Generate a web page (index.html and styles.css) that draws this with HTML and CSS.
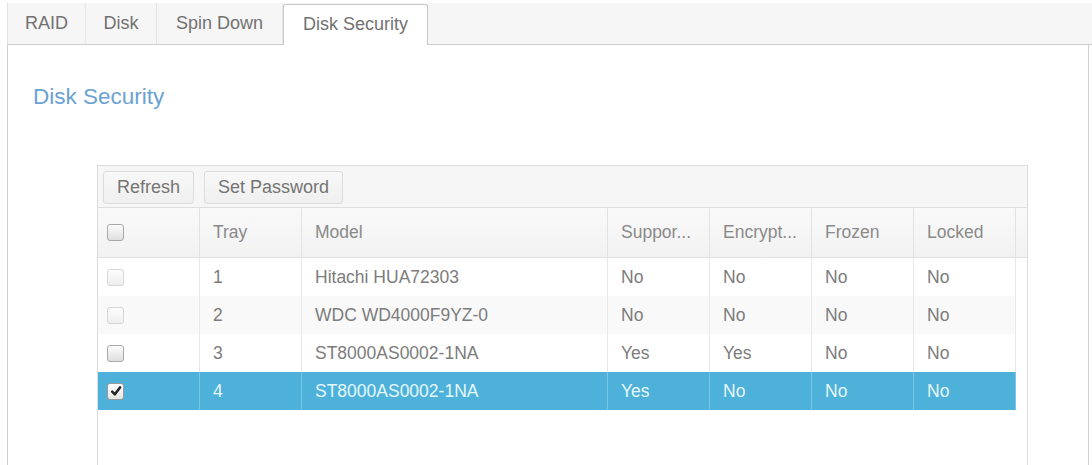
FILE: index.html
```html
<!DOCTYPE html>
<html>
<head>
<meta charset="utf-8">
<title>Disk Security</title>
<link rel="stylesheet" href="styles.css">
</head>
<body>
<div class="tabbar">
  <div class="tab first w-raid">RAID</div>
  <div class="tab w-disk">Disk</div>
  <div class="tab w-spin">Spin Down</div>
  <div class="tab active w-sec">Disk Security</div>
</div>
<div class="panel">
  <h1 class="title">Disk Security</h1>
  <div class="grid">
    <div class="toolbar">
      <button class="btn">Refresh</button>
      <button class="btn">Set Password</button>
    </div>
    <div class="head">
      <div class="hc cbcell"><span class="cb"></span></div>
      <div class="hc">Tray</div>
      <div class="hc">Model</div>
      <div class="hc">Suppor...</div>
      <div class="hc">Encrypt...</div>
      <div class="hc">Frozen</div>
      <div class="hc">Locked</div>
      <div class="hc filler"></div>
    </div>
    <div class="row">
      <div class="c cbcell"><span class="cb disabled"></span></div>
      <div class="c">1</div>
      <div class="c">Hitachi HUA72303</div>
      <div class="c">No</div>
      <div class="c">No</div>
      <div class="c">No</div>
      <div class="c">No</div>
    </div>
    <div class="row alt">
      <div class="c cbcell"><span class="cb disabled"></span></div>
      <div class="c">2</div>
      <div class="c">WDC WD4000F9YZ-0</div>
      <div class="c">No</div>
      <div class="c">No</div>
      <div class="c">No</div>
      <div class="c">No</div>
    </div>
    <div class="row">
      <div class="c cbcell"><span class="cb"></span></div>
      <div class="c">3</div>
      <div class="c">ST8000AS0002-1NA</div>
      <div class="c">Yes</div>
      <div class="c">Yes</div>
      <div class="c">No</div>
      <div class="c">No</div>
    </div>
    <div class="row selected">
      <div class="c cbcell"><span class="cb checked"><svg viewBox="0 0 12 12" width="12" height="12"><path d="M2.2 6.6 L4.9 9.3 L10 2.4" fill="none" stroke="#262626" stroke-width="2.6" stroke-linecap="round" stroke-linejoin="round"/></svg></span></div>
      <div class="c">4</div>
      <div class="c">ST8000AS0002-1NA</div>
      <div class="c">Yes</div>
      <div class="c">No</div>
      <div class="c">No</div>
      <div class="c">No</div>
    </div>
  </div>
</div>
</body>
</html>
```
FILE: styles.css
```css
html, body {
  margin: 0;
  padding: 0;
  background: #fff;
  overflow: hidden;
  height: 465px;
}
body {
  font-family: "Liberation Sans", Arial, sans-serif;
  font-size: 17.5px;
  color: #7c7c7c;
}
.tabbar {
  display: flex;
  margin: 3px 0 0 7px;
  height: 41px;
  background: #f6f6f6;
  border-bottom: 1px solid #cdcdcd;
  border-left: 1px solid #e2e2e2;
}
.tab {
  display: flex;
  align-items: center;
  justify-content: center;
  box-sizing: border-box;
  font-size: 18px;
  color: #717171;
  border-right: 1px solid #e4e4e4;
}
.w-raid { width: 78px; }
.w-disk { width: 71px; }
.w-spin { width: 126px; }
.w-sec { width: 145px; }
.tab.active {
  background: #fff;
  border: 1px solid #c8c8c8;
  border-bottom: none;
  border-radius: 3px 3px 0 0;
  margin-top: 1px;
  margin-bottom: -1px;
  padding-bottom: 2px;
}
.panel {
  margin-left: 7px;
  width: 1082px;
  height: 430px;
  border-left: 1px solid #cfcfcf;
  border-right: 1px solid #cfcfcf;
  padding-top: 39px;
  box-sizing: border-box;
}
.title {
  margin: 0 0 55px 25px;
  font-size: 22.5px;
  line-height: 26px;
  font-weight: normal;
  color: #6aa2d2;
}
.grid {
  margin-left: 89px;
  width: 931px;
  height: 320px;
  border: 1px solid #dcdcdc;
  box-sizing: border-box;
}
.toolbar {
  display: flex;
  gap: 10px;
  height: 42px;
  padding: 5px 5px 0;
  box-sizing: border-box;
  background: #f6f6f6;
  border-bottom: 1px solid #dedede;
}
.btn {
  height: 33px;
  padding: 0 13px;
  font-family: inherit;
  font-size: 18px;
  color: #747474;
  background: linear-gradient(#f8f8f8, #efefef);
  border: 1px solid #dcdcdc;
  border-radius: 3px;
}
.head {
  display: grid;
  grid-template-columns: 102px 102px 306px 102px 102px 102px 102px 1fr;
  height: 49px;
  background: linear-gradient(#f9f9f9, #f2f2f2);
  border-bottom: 1px solid #e2e2e2;
  color: #8a8a8a;
}
.hc {
  display: flex;
  align-items: center;
  padding-left: 13px;
  border-right: 1px solid #e2e2e2;
}
.hc.filler {
  border-right: none;
  padding: 0;
}
.row {
  display: grid;
  grid-template-columns: 102px 102px 306px 102px 102px 102px 102px;
  width: 918px;
  height: 38px;
  background: #fff;
}
.row.alt {
  background: #f9f9f9;
}
.row.selected {
  background: #4db1d9;
  color: #e6f7fd;
}
.c {
  display: flex;
  align-items: center;
  padding-left: 13px;
  border-right: 1px solid #e8e8e8;
}
.row.selected .c {
  border-right-color: #7cc6e3;
}
.cbcell {
  padding-left: 9px;
}
.row .cbcell {
  padding-left: 9px;
}
.cb {
  display: inline-flex;
  align-items: center;
  justify-content: center;
  width: 15px;
  height: 15px;
  border: 1px solid #a9a9a9;
  border-radius: 3px;
  background: linear-gradient(#fcfcfc, #dedede);
  box-sizing: content-box;
}
.cb.disabled {
  border-color: #d6d6d6;
  background: linear-gradient(#fdfdfd, #eeeeee);
}
.cb.checked {
  border-color: #9a9a9a;
  background: linear-gradient(#ffffff, #e6e6e6);
}
.cb svg {
  display: block;
}
```
